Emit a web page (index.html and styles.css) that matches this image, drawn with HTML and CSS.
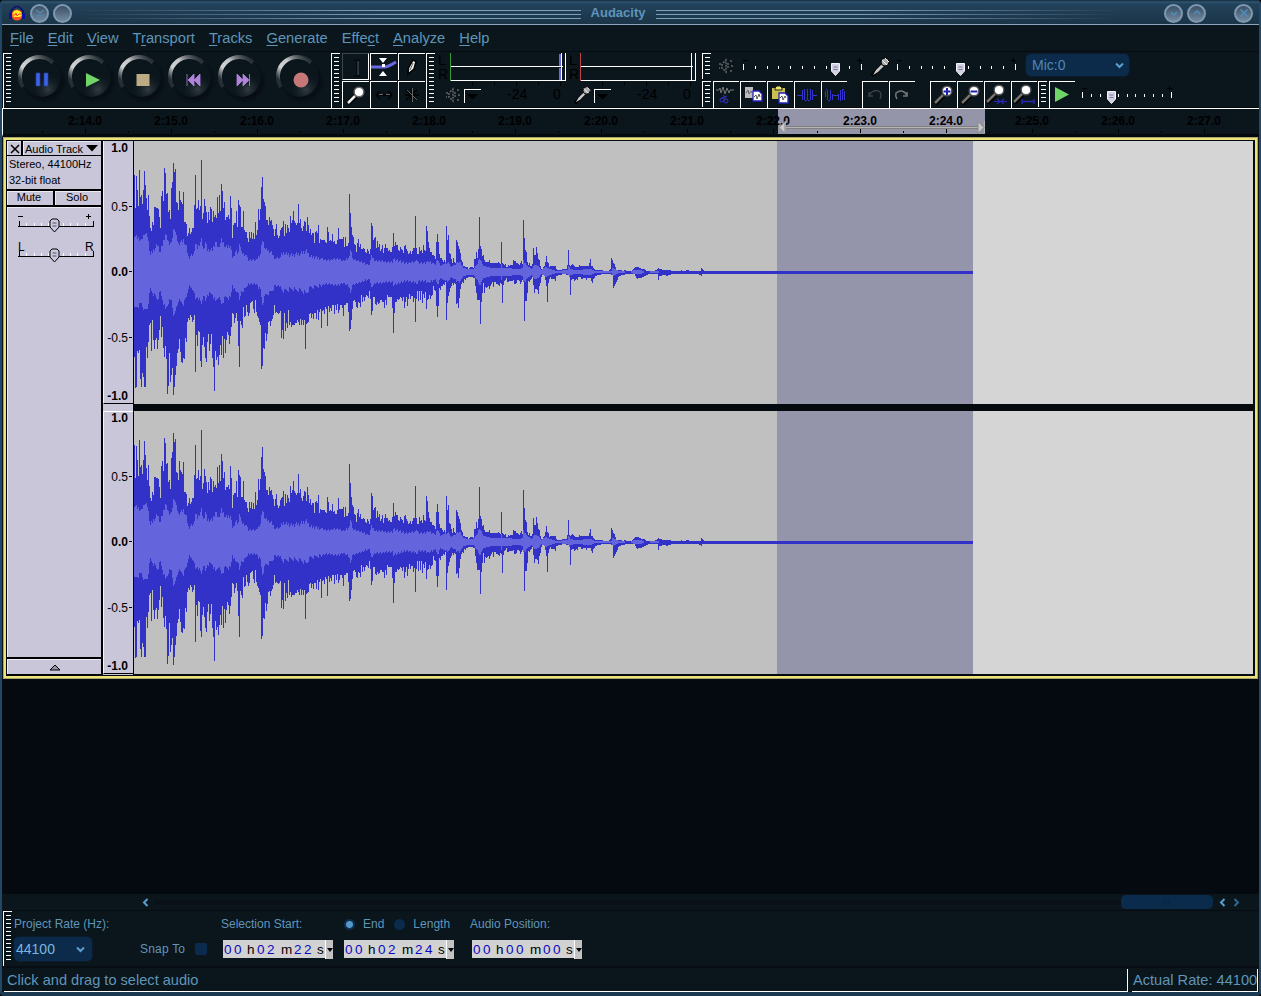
FILE: index.html
```html
<!DOCTYPE html>
<html lang="en">
<head>
<meta charset="utf-8">
<title>Audacity</title>
<link rel="stylesheet" href="styles.css">
</head>
<body>
<svg class="defs" width="0" height="0" aria-hidden="true">
  <defs>
    <linearGradient id="arc" x1="0.1" y1="0.85" x2="0.95" y2="0.1"><stop offset="0" stop-color="#b8bcc0" stop-opacity=".15"/><stop offset=".28" stop-color="#d0d2d4"/><stop offset=".55" stop-color="#c4c6c8"/><stop offset="1" stop-color="#70767a" stop-opacity=".25"/></linearGradient>
    <radialGradient id="glow" cx=".68" cy=".8" r=".45"><stop offset="0" stop-color="#343c43"/><stop offset="1" stop-color="#0b151c" stop-opacity="0"/></radialGradient>
    <radialGradient id="dark"><stop offset=".75" stop-color="#060d13"/><stop offset="1" stop-color="#0b151c"/></radialGradient>
    <filter id="soft" x="-20%" y="-20%" width="140%" height="140%"><feGaussianBlur stdDeviation=".7"/></filter>
    <symbol id="dial" viewBox="0 0 50 54">
      <circle cx="26" cy="28" r="22.500" fill="url(#dark)"/><circle cx="24" cy="25" r="19" fill="#0b151c"/><circle cx="23" cy="25" r="19" fill="url(#glow)"/>
      <path d="M5 34A19.500 19.500 0 0 1 35 9.500" fill="none" stroke="url(#arc)" stroke-width="4" filter="url(#soft)"/>
    </symbol>
    <symbol id="mag" viewBox="0 0 26 26"><path d="M4 22L12 14" stroke="#000" stroke-width="4.5"/><path d="M4 21L12 13" stroke="#77736c" stroke-width="2.5"/><circle cx="16" cy="9" r="4.800" fill="#fff" stroke="#555" stroke-width="1.4"/></symbol>
    <symbol id="mic" viewBox="0 0 20 20"><path d="M1 19L12 8" stroke="#000" stroke-width="4"/><path d="M2 18L5 13L11 7L13 9L7 15Z" fill="#c8c8c8"/><circle cx="14" cy="5" r="4" fill="#aaa" stroke="#000"/><path d="M11 3L16 8M14 1L18 5" stroke="#eee"/></symbol>
    <symbol id="spk" viewBox="0 0 16 16"><path d="M1 6H4V10H1M5 5L8 2V14L5 11M10 5v6M13 2v3M14 7v3M13 12v2" fill="none" stroke="#646464" stroke-width="1.5" stroke-dasharray="2 1"/></symbol>
    <symbol id="thumb" viewBox="0 0 11 15"><path d="M1.5 1.5H9.5V9L5.5 13.5L1.5 9Z" fill="#d2d0e4" stroke="#f3f3fb"/><path d="M3.500 5H7.5M3.500 7.500H7.5" stroke="#77778c"/></symbol>
    <symbol id="lthumb" viewBox="0 0 11 15"><path d="M1 3L3 1H8L10 3V9L5.500 14L1 9Z" fill="#c8c8e0" stroke="#000"/><path d="M3.500 5H7.500M3.500 8H7.500" stroke="#555"/></symbol>
  </defs>
</svg>
<div class="window">
  <header class="titlebar">
    <svg class="app-icon" width="18" height="18" viewBox="0 0 18 18"><circle cx="9" cy="11" r="5.500" fill="#f52"/><path d="M4 11L6 7L9 6L13 8L14 11L12 13H6Z" fill="#fe2"/><path d="M4 11h3l1-2 1 3 2-2h3" stroke="#f42" fill="none"/><path d="M3 12V7Q9-2 15 7V12" fill="none" stroke="#101070" stroke-width="1.600"/><path d="M2.500 9v6M15.500 9v6" stroke="#1010a0" stroke-width="3"/></svg>
    <span class="orb"><svg width="10" height="10"><path d="M1 2L5 5L9 2M1 7.500H9" fill="none" stroke="#5385aa" stroke-width="1.500"/></svg></span>
    <span class="orb"></span>
    <i class="lines left"></i><h1>Audacity</h1><i class="lines right"></i>
    <span class="orb"><svg width="10" height="10"><path d="M2 4L5 7L8 4" fill="none" stroke="#4d8fc0" stroke-width="1.500"/></svg></span>
    <span class="orb"><svg width="10" height="10"><path d="M2 6L5 3L8 6" fill="none" stroke="#4d8fc0" stroke-width="1.500"/></svg></span>
    <span class="orb close"><svg width="10" height="10"><path d="M1.500 1.500L8.500 8.500M8.500 1.500L1.500 8.500" fill="none" stroke="#4d8fc0" stroke-width="1.500"/></svg></span>
  </header>
  <nav class="menu">
    <a><u>F</u>ile</a><a><u>E</u>dit</a><a><u>V</u>iew</a><a>T<u>r</u>ansport</a><a><u>T</u>racks</a><a><u>G</u>enerate</a><a>Effe<u>c</u>t</a><a><u>A</u>nalyze</a><a><u>H</u>elp</a>
  </nav>

  <section class="toolbars">
    <i class="grip tall"></i>
    <div class="transport">
      <svg width="50" height="54"><use href="#dial"/><path d="M18 20h4v13h-4zM26 20h4v13h-4z" fill="#3c62ea" stroke="#25409c" stroke-width=".7"/></svg>
      <svg width="50" height="54"><use href="#dial"/><path d="M18 20L32 27L18 34Z" fill="#6fd667"/></svg>
      <svg width="50" height="54"><use href="#dial"/><path d="M18.500 21h13v12h-13z" fill="#bdab86"/></svg>
      <svg width="50" height="54"><use href="#dial"/><path d="M19 21v12M20 27l6-6v12zM26 27l6-6v12z" fill="#b084dc" stroke="#b084dc" stroke-width=".8"/></svg>
      <svg width="58" height="54"><use href="#dial" width="50" height="54"/><path d="M31.500 21v12M31 27l-6-6v12zM25 27l-6-6v12z" fill="#b084dc" stroke="#b084dc" stroke-width=".8"/></svg>
      <svg width="50" height="54"><use href="#dial"/><circle cx="25" cy="27" r="7.500" fill="#c67878"/></svg>
    </div>
    <i class="grip tall"></i>
    <div class="tools">
      <span class="btn on"><svg width="26" height="26"><path d="M11 6h2l1 1 1-1h2M14 7v14M11 22h2l1-1 1 1h2" fill="none" stroke="#000"/><path d="M15 7v14" stroke="#55585a"/></svg></span>
      <span class="btn"><svg width="27" height="26"><path d="M0 13H13Q17 13 25 8" fill="none" stroke="#6a6ae6" stroke-width="3"/><path d="M8 4h8l-4 5zM8 22h8l-4-5z" fill="#fff"/><path d="M11 10h3v3h-3z" fill="#fff"/></svg></span>
      <span class="btn"><svg width="26" height="26"><path d="M9 20L9.500 14L14 6L17 7.500L15 15Z" fill="#eee" stroke="#000" stroke-width="1.500"/><path d="M11 16L14 9" stroke="#666"/></svg></span>
      <span class="btn"><svg width="26" height="26"><path d="M5 21L13 14" stroke="#000" stroke-width="5"/><path d="M5 21L12 14" stroke="#eee" stroke-width="2.500"/><circle cx="16" cy="10" r="4.800" fill="#fff" stroke="#666" stroke-width="1.500"/></svg></span>
      <span class="btn"><svg width="26" height="26"><path d="M5 13H21M9 9L5 13L9 17M17 9L21 13L17 17" fill="none" stroke="#000" stroke-width="1.300"/><path d="M8 12.500H12M15 12.500H19" stroke="#666"/></svg></span>
      <span class="btn"><svg width="26" height="26"><path d="M13 6V20M7 8L18 18M18 8L7 18M6 13H20" fill="none" stroke="#000" stroke-width="1.500"/><path d="M13.500 6V20M8 8L18 18" fill="none" stroke="#666"/></svg></span>
    </div>
    <i class="grip tall"></i>
    <div class="meters">
      <svg class="meter" width="130" height="54"><g font-size="14"><text x="2" y="12">L</text><text x="2" y="26">R</text><text x="71" y="46">-24</text><text x="117" y="46">0</text></g><g shape-rendering="crispEdges"><path d="M14.500 0V28" stroke="#3a9a3a"/><path d="M15 13.500H127M15 27.500H129M125.500 0V28M129.500 0V28" stroke="#fff"/><path d="M124 1V13M124 15V27" stroke="#6a6ae6" stroke-width="2"/><path d="M36.500 29v4M58.500 29v3M80.500 29v4M102.500 29v3M124.500 29v4" stroke="#000"/><path d="M28.500 50V36.500H45" fill="none" stroke="#fff"/></g><path d="M31 41H42L36.500 46.500Z"/><use href="#spk" x="9" y="34" width="16" height="16"/></svg>
      <svg class="meter" width="132" height="54"><g font-size="14"><text x="3" y="12">L</text><text x="3" y="26">R</text><text x="71" y="46">-24</text><text x="117" y="46">0</text></g><g shape-rendering="crispEdges"><path d="M14.500 0V28" stroke="#b44"/><path d="M15 13.500H127M15 27.500H129M125.500 0V28M129.500 0V28" stroke="#fff"/><path d="M36.500 29v4M58.500 29v3M80.500 29v4M102.500 29v3M124.500 29v4" stroke="#000"/><path d="M28.500 50V36.500H45" fill="none" stroke="#fff"/></g><path d="M31 41H42L36.500 46.500Z"/><use href="#mic" x="8" y="33" width="18" height="18"/></svg>
    </div>
    <div class="stack">
      <div class="row mixer">
        <i class="grip"></i>
        <svg class="spk" width="16" height="16"><use href="#spk"/></svg>
        <svg class="slider" width="124" height="26" data-len="118" data-n="10" data-thumb="92"></svg>
        <svg class="mic" width="20" height="20"><use href="#mic"/></svg>
        <svg class="slider" width="124" height="26" data-len="118" data-n="10" data-thumb="63"></svg>
        <span class="select device">Mic:0<svg width="9" height="7"><path d="M1 1.500L4.500 5L8 1.500" fill="none" stroke="#5b9fce" stroke-width="2"/></svg></span>
      </div>
      <div class="row edit">
        <i class="grip"></i>
        <span class="btn"><svg width="26" height="26"><path d="M2 8h3l1-2 1 5 2-6 2 7 2-6 2 5 1-3h4" fill="none" stroke="#777"/><circle cx="8" cy="18" r="2" fill="none" stroke="#33c"/><circle cx="12" cy="19" r="2" fill="none" stroke="#33c"/><path d="M8 16l5-2M12 17l-3-4" stroke="#33c"/></svg></span>
        <span class="btn"><svg width="26" height="26"><path d="M4 5h8v11h-8z" fill="#bbb"/><path d="M5 11l2-3 1 4 2-3 1 2" fill="none" stroke="#666"/><path d="M12 9h6l3 3v7h-9z" fill="#fff" stroke="#22b" stroke-width="1.300"/><path d="M13 15l2-2 1 4 2-5 1 3" fill="none" stroke="#555"/></svg></span>
        <span class="btn"><svg width="26" height="26"><path d="M4 6h13v11h-13z" fill="#c9c04e"/><path d="M7 8V6l2-2h3l2 2v2z" fill="#eee56b" stroke="#222"/><path d="M11 11h6l3 3v7h-9z" fill="#fff" stroke="#22b" stroke-width="1.300"/><path d="M12 16l2-2 1 4 2-4 1 2" fill="none" stroke="#555"/></svg></span>
        <span class="btn"><svg width="26" height="26" shape-rendering="crispEdges"><path d="M2 13.500H7M17 13.500H22M7.500 8V18M9.500 8V18M12.500 8V18M15.500 8V18M17.500 8V18M9 7.500H10M12 7.500H13M15 7.500H16M10 18.500H12M13 18.500H15" stroke="#3535cc"/></svg></span>
        <span class="btn wide"><svg width="26" height="26" shape-rendering="crispEdges"><path d="M10 13.500H16M3.500 9V15M5.500 8V18M8.500 8V18M10.500 12V18M4 7.500H5M6 18.500H8M16.500 12V18M18.500 8V18M20.500 8V18M22.500 9V18M18 18.500H19M20 7.500H22" stroke="#3535cc"/></svg></span>
        <span class="btn"><svg width="26" height="26"><path d="M6 10v4h4M6 13Q12 6 17 10Q19 13 17 17" fill="none" stroke="#3d4346" stroke-width="1.300"/></svg></span>
        <span class="btn undo"><svg width="26" height="26"><path d="M17 10v4h-4M17 13Q12 6 6 11Q5 14 7 17" fill="none" stroke="#777" stroke-width="1.500"/></svg></span>
        <span class="btn"><svg width="26" height="26"><use href="#mag" width="26" height="26"/><path d="M12.500 9.500h7M16 6v7" stroke="#2020b0" stroke-width="2"/></svg></span>
        <span class="btn"><svg width="26" height="26"><use href="#mag" width="26" height="26"/><path d="M12.500 9.500h7" stroke="#2020b0" stroke-width="2"/></svg></span>
        <span class="btn"><svg width="26" height="26"><use href="#mag" x="-2" y="-1" width="26" height="26"/><path d="M9 19.500h13M12 17l3 2.500-3 2.500M19 17l-3 2.500 3 2.500" fill="none" stroke="#2828b8" stroke-width="1.200"/></svg></span>
        <span class="btn"><svg width="26" height="26"><use href="#mag" x="-2" y="-1" width="26" height="26"/><path d="M10 19.500h12M10 17v5M22 17v5" fill="none" stroke="#2828b8" stroke-width="1.300"/></svg></span>
        <i class="grip"></i>
        <span class="btn play"><svg width="26" height="26"><path d="M5 5L19 12.500L5 20Z" fill="#6fd667"/></svg></span>
        <svg class="slider" width="96" height="26" data-len="89" data-n="10" data-thumb="29"></svg>
      </div>
    </div>
  </section>

  <svg id="ruler" width="1257" height="28"></svg>

  <section class="track">
    <aside class="panel">
      <div class="title"><span><svg width="10" height="10"><path d="M1 1L9 9M9 1L1 9" stroke="#000" stroke-width="1.500"/></svg></span><span class="name">Audio Track<svg width="12" height="7"><path d="M0 0H12L6 6.500Z"/></svg></span></div>
      <p>Stereo, 44100Hz<br>32-bit float</p>
      <div class="ms"><span>Mute</span><span>Solo</span></div>
      <div class="body">
        <svg width="93" height="70" viewBox="1 0 93 70"><g shape-rendering="crispEdges"><path d="M11 18.500H87M11 48.500H87" stroke="#000"/><g id="pticks" stroke="#fff"></g><path d="M12.500 13v5M86.500 13v5M12.500 43v5M86.500 43v5M11 8.500h5M79 8.500h5M81.500 6v5" stroke="#000"/></g><text x="11" y="43">L</text><text x="78" y="43">R</text><use href="#lthumb" x="42" y="10" width="11" height="15"/><use href="#lthumb" x="42" y="40" width="11" height="15"/></svg>
      </div>
      <div class="fold"><svg width="12" height="7"><path d="M1 6H11L6 1Z" fill="#9696a8" stroke="#000"/></svg></div>
    </aside>
    <div class="scale">
      <div><b>1.0</b><span>0.5</span><b>0.0</b><span>-0.5</span><b>-1.0</b></div>
      <div><b>1.0</b><span>0.5</span><b>0.0</b><span>-0.5</span><b>-1.0</b></div>
    </div>
    <div class="waves">
      <svg class="wave" width="1119" height="263" shape-rendering="crispEdges"></svg>
      <svg class="wave" width="1119" height="263" shape-rendering="crispEdges"></svg>
    </div>
  </section>
  <div class="blank"></div>

  <div class="scroll">
    <svg class="la" width="7" height="9"><path d="M5.500 1L2 4.500L5.500 8" fill="none" stroke="#5b9fce" stroke-width="2"/></svg>
    <i class="rail"></i><i class="bar">|||</i>
    <svg width="7" height="9"><path d="M5.500 1L2 4.500L5.500 8" fill="none" stroke="#5b9fce" stroke-width="2"/></svg>
    <svg width="7" height="9"><path d="M1.500 1L5 4.500L1.500 8" fill="none" stroke="#33658d" stroke-width="2"/></svg>
  </div>

  <section class="selbar">
    <i class="grip tall"></i>
    <div class="col rate"><label>Project Rate (Hz):</label><span class="select">44100<svg width="9" height="7"><path d="M1 1.500L4.500 5L8 1.500" fill="none" stroke="#5b9fce" stroke-width="2"/></svg></span></div>
    <div class="col snap"><label></label><span>Snap To <i class="check"></i></span></div>
    <div class="col start"><label>Selection Start:</label><div class="time"><em>00</em><span>h</span><em>02</em><span>m</span><em>22</em><span>s</span><i></i></div></div>
    <div class="col end"><label><i class="radio sel"></i>End<i class="radio"></i>Length</label><div class="time"><em>00</em><span>h</span><em>02</em><span>m</span><em>24</em><span>s</span><i></i></div></div>
    <div class="col pos"><label>Audio Position:</label><div class="time"><em>00</em><span>h</span><em>00</em><span>m</span><em>00</em><span>s</span><i></i></div></div>
  </section>
  <footer class="status"><span class="msg">Click and drag to select audio</span><span class="actual">Actual Rate: 44100</span></footer>
</div>
<script src="main.js"></script>
</body>
</html>
```

FILE: styles.css
```css
* { box-sizing: border-box; margin: 0; padding: 0; }
body { width: 1261px; height: 996px; overflow: hidden; background: #000; font-family: "Liberation Sans", Arial, sans-serif; font-size: 12px; color: #5f95b8; }
svg { display: block; flex: none; }
i, em { font-style: normal; }
.defs { position: absolute; }
.window { width: 1261px; height: 996px; display: flex; flex-direction: column; background: #0b151c; border: 2px solid #234866; border-top: 0; border-bottom: 4px solid #1b3a52; border-radius: 4px; }
.window > * { flex: none; }

.titlebar { height: 25px; display: flex; align-items: center; padding: 2px 6px 0 7px; background: linear-gradient(#112a3d 0, #315470 2px, #22425b 4px, #1b3447 100%); border-bottom: 1px solid #8aa5bd; }
.titlebar h1 { width: 75px; text-align: center; font-size: 13px; line-height: 20px; color: #5e94bb; padding-bottom: 1px; }
.app-icon { margin-right: 2px; margin-left: -1px; }
.orb { width: 19px; height: 19px; margin: 1px 2px; border-radius: 50%; border: 2px solid #7d99b2; background: linear-gradient(#3b5064, #7389a0); display: flex; align-items: center; justify-content: center; flex: none; }
.orb.close { margin-left: 26px; margin-right: 0; }
.lines { flex: 1; height: 9px; background: repeating-linear-gradient(#7f9eb8 0 1px, transparent 1px 4px); margin-top: 2px; }
.lines.left { -webkit-mask-image: linear-gradient(90deg, transparent, #000 60%); }
.lines.right { -webkit-mask-image: linear-gradient(270deg, transparent 8%, #000 60%); }

.menu { height: 26px; display: flex; gap: 14px; padding: 4px 0 0 8px; font-size: 14.7px; line-height: 18px; }
.menu u { text-decoration-thickness: 1px; text-underline-offset: 2px; }

.toolbars { height: 57px; display: flex; padding: 1px 0 0 1px; border-top: 1px solid #060c11; border-bottom: 1px solid #050a0e; }
.grip { display: block; flex: none; width: 9px; height: 26px; border-left: 1px solid #fff; border-top: 1px solid #fff; padding: 3px 1px 3px 2px; background: repeating-linear-gradient(#fff 0 1px, transparent 1px 4px) content-box; }
.grip.tall { height: 55px; }
.transport { display: flex; width: 319px; padding-left: 6px; }
.tools { display: grid; grid-template-columns: 28px 28px 28px; grid-auto-rows: 28px; width: 86px; padding-left: 2px; }
.btn { display: block; width: 26px; height: 27px; border-left: 1px solid #fff; border-top: 1px solid #fff; flex: none; }
.tools .btn { width: 27px; }
.btn.on { border-color: #3c454b #fff #fff #3c454b; border-style: solid; border-width: 1px; }
.meters { display: flex; margin-left: 1px; width: 266px; font-size: 14px; }
.meter text { fill: #000; }
.stack { width: 540px; }
.row { display: flex; height: 28px; }
.spk { margin: 5px 0 0 7px; }
.mixer .slider { margin-left: 9px; }
.mic { margin: 4px 0 0 4px; }
.mixer .mic + .slider { margin-left: 6px; }
.edit .btn { margin-right: 1px; }
.edit .grip + .btn { margin-left: 2px; }
.edit .btn.wide { margin-right: 15px; }
.edit .btn.undo { margin-right: 15px; }
.edit .slider { margin-left: 6px; }
.select { display: flex; align-items: center; background: #0c2b4a; border-radius: 5px; color: #6fa9d0; font-size: 14px; justify-content: space-between; box-shadow: 0 0 0 1px #0a1c2c; }
.device { width: 103px; height: 22px; margin: 1px 0 0 5px; padding: 0 5px 0 6px; color: #5088b4; }

#ruler { border-left: 1px solid #fff; border-top: 1px solid #fff; height: 29px; border-bottom: 3px solid #04090d; }
#ruler text { font-weight: bold; font-size: 12px; fill: #000; text-anchor: middle; }

.track { margin-left: 1px; width: 1255px; height: 542px; display: flex; border: 1px solid #aaa56c; box-shadow: inset 0 0 0 2px #ece37b; padding: 3px; background: #050a0f; color: #000; }
.panel { width: 94px; display: flex; flex-direction: column; gap: 2px; font-size: 11px; background: #000; }
.panel p, .panel span, .body, .fold { background: #c8c6d8; border-left: 1px solid #eceaf6; }
.panel span, .body, .fold { border-top: 1px solid #eceaf6; }
.title { display: flex; gap: 2px; height: 14px; }
.title span { width: 14px; display: flex; align-items: center; justify-content: center; }
.title .name { flex: 1; justify-content: space-between; padding: 0 3px 0 1px; white-space: nowrap; }
.panel p { height: 33px; line-height: 16px; padding-left: 1px; margin-top: -1px; }
.ms { display: flex; gap: 2px; height: 14px; line-height: 11px; text-align: center; }
.ms span { flex: 1; padding-right: 3px; }
.body { flex: 1; }
.body text { font-size: 12px; }
.fold { height: 15px; margin-bottom: 1px; display: flex; align-items: center; justify-content: center; }
.scale { width: 33px; border-left: 2px solid #000; border-right: 1px solid #000; font-size: 12px; background: #c8c6d8; }
.scale div { height: 263px; padding-right: 5px; display: grid; grid-template-rows: 14px 59px 65px 66px auto; text-align: right; line-height: 14px; border-left: 1px solid #f4f4fa; border-bottom: 1px solid #000; }
.scale div > * { align-self: end; }
.scale div > :nth-child(2)::after, .scale div > :nth-child(3)::after, .scale div > :nth-child(4)::after { content: ""; display: inline-block; width: 3px; height: 1px; background: #000; vertical-align: 4px; margin: 0 -4px 0 1px; }
.scale div + div { margin-top: 7px; border-top: 1px solid #fff; grid-template-rows: 13px 59px 65px 66px auto; }
.waves { display: flex; flex-direction: column; gap: 7px; }
.waves svg { background: linear-gradient(90deg, #c0c0c0 643px, #9494aa 643px 839px, #d5d5d5 839px); }

.blank { height: 215px; background: #040a10; }
.scroll { height: 17px; display: flex; align-items: center; border-bottom: 1px solid #060c11; }
.scroll .la { margin-left: 140px; }
.rail { width: 966px; height: 5px; margin-left: 6px; background: #091117; border-radius: 3px; }
.bar { width: 92px; height: 14px; border-radius: 5px; background: #0b2b4c; font-size: 7px; line-height: 13px; text-align: center; color: #071d34; letter-spacing: 1px; margin-right: 6px; }
.scroll .bar + svg { margin-right: 7px; }

.selbar { height: 56px; display: flex; padding-left: 1px; border-bottom: 1px solid #060c11; }
.col { display: flex; flex-direction: column; }
.col label { height: 26px; line-height: 27px; white-space: nowrap; display: flex; align-items: center; }
.rate { width: 128px; padding-left: 2px; }
.rate .select { width: 78px; height: 24px; padding: 0 7px 0 2px; color: #7cb6dc; }
.snap { width: 81px; }
.snap span { display: flex; align-items: center; height: 24px; letter-spacing: .2px; }
.check { width: 12px; height: 12px; background: #0b2b4c; margin-left: 10px; border-radius: 2px; }
.start { width: 122px; }
.end { width: 127px; }
.end label { padding-left: 1px; }
.radio { width: 11px; height: 11px; border-radius: 50%; background: #0b2b4c; margin: 0 8px 0 10px; }
.radio.sel { margin-left: 0; background: radial-gradient(#5597c8 0 3px, #0c2f50 4px); }
.time { margin: 3px 0 0 2px; width: 110px; height: 18px; padding-left: 1px; background: #d2d2d2; display: grid; grid-template-columns: 23px 10px 24px 13px 23px 8px 8px; font-size: 13.5px; line-height: 19px; color: #000; }
.end .time { margin-left: 1px; }
.pos .time { margin-left: 2px; }
.time em { color: #0a0ac0; letter-spacing: 2.5px; }
.time i { background: #c2c2c2; border-left: 1px solid #fff; display: flex; align-items: center; justify-content: center; }
.time i::after { content: ""; border: 3.500px solid transparent; border-top: 4px solid #000; border-bottom: 0; }
.status { height: 25px; display: flex; font-size: 14.600px; line-height: 23px; gap: 4px; padding: 1px 1px 0 2px; border-top: 1px solid #070d12; }
.status span { border-right: 1px solid #fff; border-bottom: 1px solid #fff; height: 23px; white-space: nowrap; }
.msg { width: 1124px; padding-left: 3px; }
.actual { flex: 1; padding-left: 1px; overflow: hidden; }
```

FILE: main.js
```javascript
// Sample peaks, one value per pixel column; "v*n" repeats v for n columns.
const peaksUp = `97 64 96 82 66 102 75 77 68 82 101 87 74 62 77 56 44 41 50 47 65 65 64 64 63 55 44 76 81 71 104 99 78 79 60 62 53 84 90 109 100 103 70 69 62 81 72 70 68 80 50 50 48 36 39 44 38 40 44 44 67 97 63 64 72 62 66 112 53 59 73 66 60 49 60 52 65 63 50 61 55 57 54 75 59 77 61 88 81 64 70 52 55 55 57 53 76 64 34 47 49 49 61 45 72 67 65 45 45 61 42 40 40 34 30 40 34 40 33 39 33 50 37 42 63 52 63 85 95 73 70 66 52 52 47 55 51 52 47 43 36 43 48 37 34 36 42 44 45 51 36 48 39 47 44 40 56 49 52 61 51 49 47 49 68 49 53 44 41 46 51 50 41 55 47 39 43 37 39 39 29 40 41 39 47 29 33 32*4 30 29 45 40 31 32 31 38 30 31 28 28 32 44 33*4 35 25 35 26 26 29
78 59 45 37 35 28 27 20 29 33 25 28 23 23 24 23 20 19 23 21 18 23 49 46 32 34 35 24 31 25 28 21 23 27 19 24 28 24 24 21 22 20 20 25 39 26 30 27 27 22 21 25 23 22 19 26 27 23 21 18 19 21 18 21 24 24 56 24 18 18 25 21 22 19 27 22 21 46 41 30 24 20 20 17 17 16 13 30 38 30 18 14 14 12 10 12 10 46 32 37 19 18 13 9 14 10 9 32 30 26 23 19 12 10 6 6 5*3 3 4 5*3 4 13 13 20 14 23 55 26 23 16 17 12 10*4 12 9*8 10 9 8 30 9 8 7 8 5 5 7 6 7*3 12 11 11 9 9 8 7 9 11 8 52 34 22 20 10 7 9 6 6 8 24 17 17 25 19 13 12 6 3 3 5 6 10 16 10 9 5 6*6 3 2*5 3*5 7 22 7 6 7 8 7 6 5*4 7 6*9 9 13 6 6 4 3 2*8 1*6 2 3 14 12 9 8 5 2*6 1*2 2*2 1*6 2 3 4 5*4 4 4 3*4 2 1*9 2*2 3 4 3 3 3 2*9 1*10 2 1*4 2*3 1*12 4 3 2 1*270`;
const peaksDown = `85 116 115 79 81 78 107 115 101 105 115 115 75 86 70 53 51 79 48 68 77 68 66 77 68 58 44 65 55 76 85 74 87 122 114 81 110 103 96 123 115 103 94 81 77 67 80 90 91 86 87 66 70 50 46 48 43 45 50 48 43 100 63 74 59 60 89 95 73 65 75 86 90 70 62 79 72 62 86 95 119 79 88 85 93 83 73 83 64 86 67 81 68 60 63 72 64 55 41 42 51 46 41 49 74 95 49 53 56 35 45 44 33 40 44 41 31 30 29 37 41 28 40 44 46 50 53 97 94 76 77 61 69 62 50 49 54 49 47 43 33 41 40 41 42 41 39 66 58 67 41 59 51 56 38 53 50 55 53 53 53 51 51 48 50 53 47 53 48 53 48 77 52 51 50 42 41 46 42 47 41 41 47 38 48 40 37 56 39 38 42 35 37 54 34 40 36 39 33 33 42 33 38 32 41 38 33 33 36 44 33 33 31 31 40
59 57 48 37 29 28 30 35 36 30 31 35 23 30 25 29 25 23 24 26 19 27 43 39 25 25 32 33 30 32 31 28 28 30 30 36 28 33 23 25*4 36 61 41 30 30 27 28 27 25 26 29 25 36 30 25 34 27 22 27 24 24 30 26 50 27 19 29 19 28 19 31 22 26 20 37 28 27 23 27 24 23 14 18 19 34 45 34 16 18 14 14 12 13 10 48 31 24 20 16 14 11 13 11 12 32 31 36 26 17 12 10 11 7 8 6 6 5*4 5 6 6 14 21 28 28 28 52 30 21 11 21 15 16 15 14 17 14 12 10 15 10 10 12 12 13 14 11 12 31 13 9 8 6 10 10 9*4 8 12 12 11 8 8 9 12 10 8 10 49 29 29 21 9 10 8 7 5 13 21 17 17 18 22 14 11 5 3 3 4 8 14 30 11 7 5 7*4 9 4 4 3*4 2*4 3*3 5 23 8 7 7 9 8 7 8 5 5 5 7 7 6 6 6 8 6*4 9 11 7 6 4 4 3*4 2*10 3 3 16 14 12 10 8 5 4 4 3*4 2*10 4 6 7 6*4 5 5 4 4 3 3 2*10 8 4 4 4 3*4 4*2 3*3 2*28 3 3 4 2*270`;
// RMS envelope as column / level pairs, interpolated between entries.
const rms = [134,37,141,31,144,39,147,36,150,17,154,23,157,27,160,20,165,38,168,30,171,28,173,42,174,44,176,35,178,28,183,32,186,25,188,15,193,17,195,28,197,24,201,32,203,22,205,30,207,22,212,22,215,30,218,24,221,32,225,25,230,26,232,13,235,20,238,19,239,30,241,19,245,17,248,12,256,12,260,18,262,32,265,23,270,20,275,14,279,14,283,19,290,17,300,18,306,21,310,15,320,14,325,12,338,13,343,11,348,14,350,22,352,13,358,11,369,7,371,15,375,11,392,10,393,13,405,9,415,10,416,13,418,9,425,9,428,11,435,7,437,13,440,6,446,9,448,9,451,5,456,9,459,10,463,4,468,3,473,3,477,8,479,14,483,6,492,4,500,4,501,8,502,4,520,3,522,4,523,11,527,6,531,3,534,7,538,6,541,2,545,5,550,3,556,1,567,2,568,6,570,3,575,2,590,3,594,1,611,1,612,4,615,3,618,1,630,0,634,2,640,2,644,0,655,1,662,0,972,0];
const expand = s => s.trim().split(/\s+/).flatMap(t => { const [v, n] = t.split('*'); return Array(+(n || 1)).fill(+v); });
const up = expand(peaksUp), down = expand(peaksDown);
function level(x) {
  for (let i = 0; i < rms.length - 2; i += 2)
    if (x <= rms[i + 2]) return rms[i + 1] + (rms[i + 3] - rms[i + 1]) * (x - rms[i]) / (rms[i + 2] - rms[i]);
  return 0;
}
let peak = '', body = '';
for (let i = 0; i < 839; i++) {
  const u = up[i] ?? 1, d = down[i] ?? 2;
  peak += `M${i} ${131 - u}h1v${u + d}h-1z`;
  const r = level(i + 134), noise = k => r > 14 ? (i * k % 5) - 2 : r > 8 ? (i * k % 3) - 1 : 0;
  const a = Math.min(u, Math.round(r + noise(7))), b = Math.min(d, Math.round(r + noise(11)));
  if (a > 0) body += `M${i} ${131 - a}h1v${a + b}h-1z`;
}
document.querySelectorAll('.wave').forEach(w => { w.innerHTML = `<path fill="#3232c8" d="${peak}"/><path fill="#6464dc" d="${body}"/>`; });

let scale = '<path d="M775 0h207v25h-207z" fill="#9595aa"/>', ticks = '';
for (let k = 0; k < 14; k++) {
  const x = Math.round(81.6 + k * 86.1);
  scale += `<text x="${x}" y="16">2:${14 + k}.0</text>`;
  ticks += `M${x}.5 20v4M${x - 43}.5 22v2`;
}
scale += `<path d="${ticks}" stroke="#000"/><path d="M782 17.500H976M782 19.500H976" stroke="#808080"/><path d="M782 18.500H976M782.5 12v12M981.5 12v12" stroke="#b5b5b5"/><path d="M776 18.500L782 12.500V24.500ZM981 18.500L975 12.500V24.500Z" fill="#c8c8c8" stroke="#888"/>`;
document.getElementById('ruler').innerHTML = scale;

document.querySelectorAll('.slider').forEach(s => {
  const len = +s.dataset.len, n = +s.dataset.n;
  let d = '';
  for (let i = 0; i <= n; i++) { const e = i === 0 || i === n; d += `M${Math.round(i * len / n)}.5 ${e ? 11 : 13}V${e ? 17 : 16}`; }
  s.innerHTML = `<g shape-rendering="crispEdges"><path d="${d}" stroke="#fff"/><path d="M0 7.5h5M${len - 4} 7.5h5M${len - 1.5} 5v5" stroke="#000"/></g><use href="#thumb" x="${s.dataset.thumb - 5}" y="9" width="11" height="15"/>`;
});
let pt = '';
for (let i = 1; i < 10; i++) pt += `<path d="M${12 + Math.round(i * 7.3)}.5 15v3M${12 + Math.round(i * 7.3)}.5 45v3"/>`;
document.getElementById('pticks').innerHTML = pt;
```
